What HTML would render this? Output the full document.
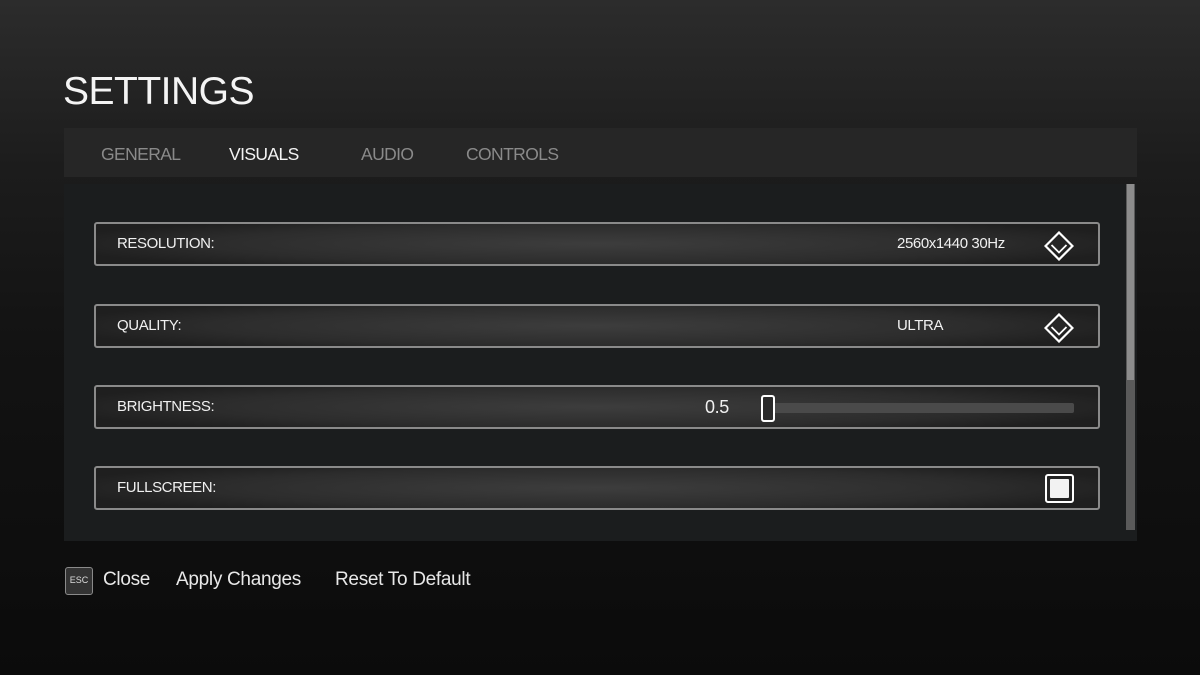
<!DOCTYPE html>
<html><head><style>
*{margin:0;padding:0;box-sizing:border-box}
body{width:1200px;height:675px;overflow:hidden;background:linear-gradient(180deg,#2c2c2c 0%,#1c1c1c 25%,#131313 50%,#0b0b0b 100%);font-family:"Liberation Sans",sans-serif;color:#eee;position:relative}
.abs{position:absolute}
h1{position:absolute;left:63px;top:70px;font-size:39px;font-weight:normal;color:#f4f4f4;letter-spacing:-0.5px}
.tabs{left:64px;top:128px;width:1073px;height:49px;background:#262626}
.tab{position:absolute;top:144px;font-size:17.5px;color:#8a8a8a;letter-spacing:-0.6px}
.panel{left:64px;top:184px;width:1073px;height:357px;background:#1b1d1e}
.sb{left:1126px;top:184px;width:9px;height:346px;background:#5a5a5a}
.sbt{left:1127px;top:184px;width:7px;height:196px;background:#8c8c8c}
.row{position:absolute;left:94px;width:1006px;height:44px;border:2px solid #8a8a8a;border-radius:3px;background:radial-gradient(ellipse 55% 70% at 50% 50%,#3d3d3d 0%,#2c2c2c 70%,#1f1f1f 100%)}
.lbl{position:absolute;left:21px;top:11px;font-size:15px;color:#f0f0f0;letter-spacing:-0.4px}
.val{position:absolute;top:11px;font-size:15px;color:#f0f0f0;letter-spacing:-0.4px}
.foot{position:absolute;top:569px;font-size:19px;color:#e8e8e8;letter-spacing:-0.3px}
</style></head><body>
<h1>SETTINGS</h1>
<div class="abs tabs"></div>
<div class="tab" style="left:101px">GENERAL</div>
<div class="tab" style="left:229px;color:#f4f4f4">VISUALS</div>
<div class="tab" style="left:361px">AUDIO</div>
<div class="tab" style="left:466px">CONTROLS</div>
<div class="abs panel"></div>
<div class="abs sb"></div><div class="abs sbt"></div>

<div class="row" style="top:222px"><span class="lbl">RESOLUTION:</span><span class="val" style="left:801px">2560x1440 30Hz</span>
<svg class="abs" style="left:948px;top:7px" width="30" height="30" viewBox="0 0 30 30"><path d="M15 1.5 L28.5 15 L15 28.5 L1.5 15 Z" fill="none" stroke="#fff" stroke-width="2.2"/><path d="M7.5 14 L15 21.5 L22.5 14" fill="none" stroke="#fff" stroke-width="1.8"/></svg></div>

<div class="row" style="top:304px"><span class="lbl">QUALITY:</span><span class="val" style="left:801px">ULTRA</span>
<svg class="abs" style="left:948px;top:7px" width="30" height="30" viewBox="0 0 30 30"><path d="M15 1.5 L28.5 15 L15 28.5 L1.5 15 Z" fill="none" stroke="#fff" stroke-width="2.2"/><path d="M7.5 14 L15 21.5 L22.5 14" fill="none" stroke="#fff" stroke-width="1.8"/></svg></div>

<div class="row" style="top:385px"><span class="lbl">BRIGHTNESS:</span><span class="val" style="left:609px;top:10px;font-size:18px">0.5</span>
<div class="abs" style="left:672px;top:16px;width:306px;height:10px;background:#4a4a4a;border-radius:2px"></div>
<div class="abs" style="left:665px;top:8px;width:14px;height:27px;border:2px solid #fff;border-radius:3px;background:#2a2a2a"></div></div>

<div class="row" style="top:466px"><span class="lbl">FULLSCREEN:</span>
<div class="abs" style="left:949px;top:6px;width:29px;height:29px;border:2px solid #fff;border-radius:3px;padding:3px"><div style="width:100%;height:100%;background:#f2f2f2;border-radius:1px"></div></div></div>

<div class="abs" style="left:65px;top:567px;width:28px;height:28px;border:1.5px solid #8a8a8a;border-radius:3px;background:#333;font-size:9px;color:#ddd;text-align:center;line-height:25px">ESC</div>
<div class="foot" style="left:103px">Close</div>
<div class="foot" style="left:176px">Apply Changes</div>
<div class="foot" style="left:335px">Reset To Default</div>
</body></html>
